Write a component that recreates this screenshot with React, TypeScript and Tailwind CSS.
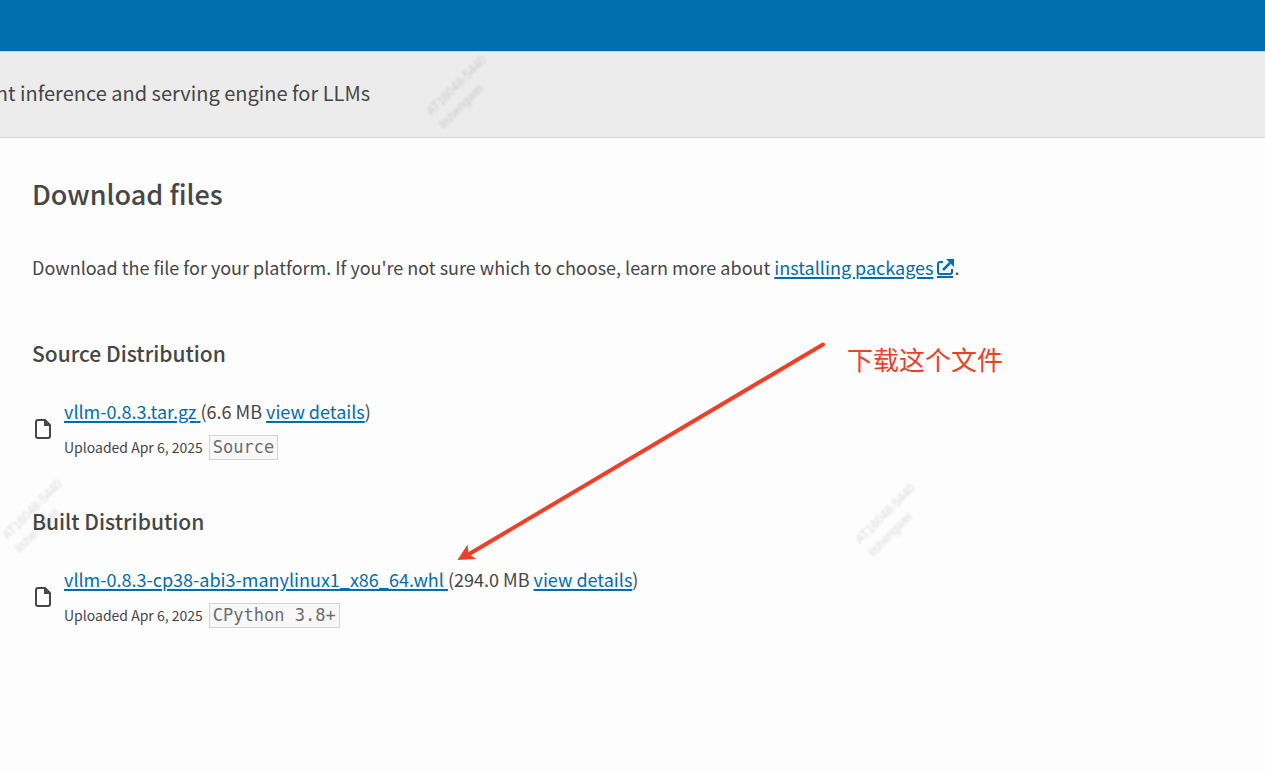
import type { ReactNode } from "react";

function TextLink({ href, children }: { href: string; children: ReactNode }) {
  return (
    <a
      href={href}
      className="text-[#006dad] underline decoration-2 underline-offset-2"
    >
      {children}
    </a>
  );
}

function FileIcon() {
  return (
    <svg
      viewBox="0 0 16 20"
      className="h-5 w-4 shrink-0"
      aria-hidden="true"
    >
      <path
        d="M3 1H10L15 6V17Q15 19 13 19H3Q1 19 1 17V3Q1 1 3 1Z"
        fill="none"
        stroke="#464646"
        strokeWidth="2"
      />
      <path d="M9 1V7H15Z" fill="#464646" />
    </svg>
  );
}

function ExternalIcon() {
  return (
    <svg
      viewBox="0 0 17 20"
      className="ml-1 inline-block h-5 w-[17px] align-[-4px]"
      aria-hidden="true"
    >
      <path
        d="M6 3H3Q1 3 1 5V13Q1 15 3 15H13Q15 15 15 13V10"
        fill="none"
        stroke="#006dad"
        strokeWidth="2"
      />
      <path d="M6 11L13 4" stroke="#006dad" strokeWidth="2.500" />
      <path d="M9 0H17V8Z" fill="#006dad" />
      <path d="M0 18H16" stroke="#006dad" strokeWidth="2" />
    </svg>
  );
}

interface FileEntry {
  heading: string;
  name: string;
  size: string;
  tag: string;
}

const files: FileEntry[] = [
  {
    heading: "Source Distribution",
    name: "vllm-0.8.3.tar.gz",
    size: "6.6 MB",
    tag: "Source",
  },
  {
    heading: "Built Distribution",
    name: "vllm-0.8.3-cp38-abi3-manylinux1_x86_64.whl",
    size: "294.0 MB",
    tag: "CPython 3.8+",
  },
];

function Distribution({ heading, name, size, tag }: FileEntry) {
  return (
    <section className="pb-10">
      <h3 className="text-[21px] leading-8 font-medium">{heading}</h3>
      <div className="mt-6 flex items-center gap-[13px] pl-[3px]">
        <FileIcon />
        <div>
          <p className="text-[18px] leading-9">
            <TextLink href="#file">{name} </TextLink>({size}{" "}
            <TextLink href="#details">view details</TextLink>)
          </p>
          <p className="flex items-center gap-[6px] text-[14px] leading-9">
            Uploaded Apr 6, 2025
            <code className="border border-[#d3d3d3] bg-[#f8f8f8] px-[3px] font-['DejaVu_Sans_Mono',monospace] text-[17px] leading-[23px] text-[#6c6c6c]">
              {tag}
            </code>
          </p>
        </div>
      </div>
    </section>
  );
}

function Watermark({ className }: { className: string }) {
  return (
    <div
      aria-hidden="true"
      className={
        "pointer-events-none absolute w-24 -rotate-45 font-['Liberation_Sans',sans-serif] text-[12px] leading-[18px] text-black/15 blur-[1px] " +
        className
      }
    >
      AT16048-5440
      <br />
      lishengwei
    </div>
  );
}

export default function App() {
  return (
    <div className="relative min-h-screen overflow-hidden bg-[#fdfdfd] font-['Noto_Sans_CJK_SC',sans-serif] text-[#464646]">
      <header className="h-[51px] bg-[#006dad]" />
      <div className="border-y border-[#d3d3d3] bg-[#ececec] pt-[23px] pb-[26px]">
        <p className="flex w-[370px] justify-end text-[20px] leading-9 whitespace-nowrap">
          ent inference and serving engine for LLMs
        </p>
      </div>
      <main className="px-8 pt-9">
        <h2 className="text-[27px] leading-10 font-medium">Download files</h2>
        <p className="mt-[35px] text-[18px] leading-9">
          Download the file for your platform. If you're not sure which to
          choose, learn more about{" "}
          <TextLink href="#installing">
            installing packages
            <ExternalIcon />
          </TextLink>
          .
        </p>
        <div className="mt-[52px]">
          {files.map((file) => (
            <Distribution key={file.name} {...file} />
          ))}
        </div>
      </main>

      <Watermark className="top-[68px] left-[421px]" />
      <Watermark className="top-[492px] left-[-3px]" />
      <Watermark className="top-[496px] left-[850px]" />

      <svg
        className="pointer-events-none absolute top-[340px] left-[455px] h-[224px] w-[372px]"
        viewBox="455 340 372 224"
        aria-hidden="true"
      >
        <path
          d="M823 344.500L470 553.500"
          stroke="#ee4028"
          strokeWidth="4"
          strokeLinecap="round"
        />
        <path d="M457.500 560L467.500 544.500L468.500 554L476.500 559Z" fill="#ee4028" />
      </svg>
      <p className="absolute top-[339px] left-[847px] text-[26px] leading-10 text-[#ee4028]">
        下载这个文件
      </p>
    </div>
  );
}
